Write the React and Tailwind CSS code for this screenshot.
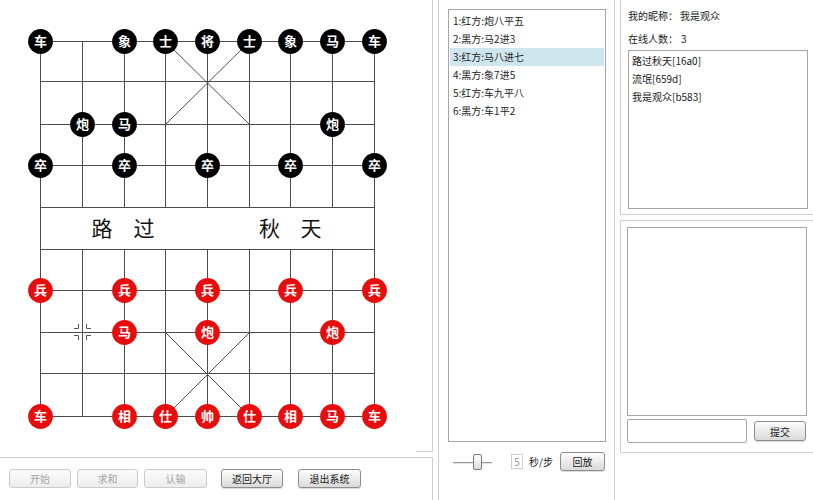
import React from 'react';

const COLS = [40.5, 82.5, 124.5, 165.5, 207.5, 249.5, 290.5, 332.5, 374.5];
const ROWS = [41.5, 81.5, 124.5, 165.5, 207.5, 249.5, 290.5, 332.5, 373.5, 416.5];

const PIECES = [
  [0, 0, '车', 'b'], [2, 0, '象', 'b'], [3, 0, '士', 'b'], [4, 0, '将', 'b'], [5, 0, '士', 'b'], [6, 0, '象', 'b'], [7, 0, '马', 'b'], [8, 0, '车', 'b'],
  [1, 2, '炮', 'b'], [2, 2, '马', 'b'], [7, 2, '炮', 'b'],
  [0, 3, '卒', 'b'], [2, 3, '卒', 'b'], [4, 3, '卒', 'b'], [6, 3, '卒', 'b'], [8, 3, '卒', 'b'],
  [0, 6, '兵', 'r'], [2, 6, '兵', 'r'], [4, 6, '兵', 'r'], [6, 6, '兵', 'r'], [8, 6, '兵', 'r'],
  [2, 7, '马', 'r'], [4, 7, '炮', 'r'], [7, 7, '炮', 'r'],
  [0, 9, '车', 'r'], [2, 9, '相', 'r'], [3, 9, '仕', 'r'], [4, 9, '帅', 'r'], [5, 9, '仕', 'r'], [6, 9, '相', 'r'], [7, 9, '马', 'r'], [8, 9, '车', 'r'],
];

const FONT = "'Noto Sans CJK SC', 'Noto Sans', sans-serif";

function Board() {
  const lines = [];
  ROWS.forEach((y, j) =>
    lines.push(<line key={'h' + j} x1={COLS[0]} y1={y} x2={COLS[8]} y2={y} />)
  );
  COLS.forEach((x, i) => {
    if (i === 0 || i === 8) {
      lines.push(<line key={'v' + i} x1={x} y1={ROWS[0]} x2={x} y2={ROWS[9]} />);
    } else {
      lines.push(<line key={'va' + i} x1={x} y1={ROWS[0]} x2={x} y2={ROWS[4]} />);
      lines.push(<line key={'vb' + i} x1={x} y1={ROWS[5]} x2={x} y2={ROWS[9]} />);
    }
  });
  lines.push(<line key="d1" x1={COLS[3]} y1={ROWS[0]} x2={COLS[5]} y2={ROWS[2]} />);
  lines.push(<line key="d2" x1={COLS[5]} y1={ROWS[0]} x2={COLS[3]} y2={ROWS[2]} />);
  lines.push(<line key="d3" x1={COLS[3]} y1={ROWS[7]} x2={COLS[5]} y2={ROWS[9]} />);
  lines.push(<line key="d4" x1={COLS[5]} y1={ROWS[7]} x2={COLS[3]} y2={ROWS[9]} />);

  return (
    <svg width="432" height="451" className="block">
      <g stroke="#4d4d4d" strokeWidth="1">{lines}</g>
      <g fill="#111" fontSize="21" fontFamily={FONT}>
        <text x="102" y="236" textAnchor="middle">路</text>
        <text x="144" y="236" textAnchor="middle">过</text>
        <text x="269.5" y="236" textAnchor="middle">秋</text>
        <text x="311" y="236" textAnchor="middle">天</text>
      </g>
      <g stroke="#555" strokeWidth="1" fill="none">
        <path d="M74 328.5 H78.5 V324" />
        <path d="M91 328.5 H86.5 V324" />
        <path d="M74 335.5 H78.5 V340" />
        <path d="M91 335.5 H86.5 V340" />
      </g>
      {PIECES.map(([c, r, ch, side], k) => (
        <g key={k}>
          <circle cx={COLS[c]} cy={ROWS[r]} r="12.4" fill={side === 'b' ? '#000000' : '#e80c0c'} />
          <text
            x={COLS[c]}
            y={ROWS[r] + 4.6}
            textAnchor="middle"
            fill="#ffffff"
            fontSize="13"
            fontWeight="bold"
            fontFamily={FONT}
          >
            {ch}
          </text>
        </g>
      ))}
    </svg>
  );
}

function Btn({ children, disabled, className }) {
  return (
    <div
      className={
        disabled
          ? `flex items-center justify-center rounded-[3px] border border-[#cbcbcb] bg-linear-to-b from-[#fbfbfb] to-[#ededed] text-[10px] text-[#a3a3a3] ${className}`
          : `flex items-center justify-center rounded-[3px] border border-[#8e8e8e] bg-linear-to-b from-[#fdfdfd] to-[#dadada] text-[10px] text-[#1a1a1a] shadow-[0_1px_1px_rgba(0,0,0,0.15)] ${className}`
      }
    >
      {children}
    </div>
  );
}

const MOVES = ['1:红方:炮八平五', '2:黑方:马2进3', '3:红方:马八进七', '4:黑方:象7进5', '5:红方:车九平八', '6:黑方:车1平2'];

export default function App() {
  return (
    <div
      className="w-[813px] h-[500px] bg-white flex overflow-hidden text-[#222]"
      style={{ fontFamily: FONT }}
    >
      {/* left column */}
      <div className="w-[433px] flex flex-col">
        <div className="h-[452px] border-r border-[#cfcfcf] flex flex-col">
          <Board />
          <div className="flex h-px">
            <div className="flex-1" />
            <div className="w-[16px] bg-[#cfcfcf]" />
          </div>
        </div>
        <div className="mt-[5px] flex-1 border-t border-r border-[#cfcfcf] flex items-start pt-[11px] pl-[9px]">
          <Btn disabled className="w-[62px] h-[19px]">开始</Btn>
          <Btn disabled className="ml-[6px] w-[61px] h-[19px]">求和</Btn>
          <Btn disabled className="ml-[6px] w-[63px] h-[19px]">认输</Btn>
          <Btn className="ml-[14px] w-[62px] h-[19px]">返回大厅</Btn>
          <Btn className="ml-[15px] w-[63px] h-[19px]">退出系统</Btn>
        </div>
      </div>

      {/* middle column */}
      <div className="ml-[5px] w-[177px] h-full border-l border-r border-[#cfcfcf] flex flex-col pt-[9px] pl-[9px] pr-[8px]">
        <div className="h-[433px] border border-[#a6a6a6] bg-white pt-[2px] px-px">
          {MOVES.map((m, i) => (
            <div
              key={i}
              className={
                i === 2
                  ? 'h-[18px] leading-[18px] pl-[3px] text-[10px] text-[#222] bg-[#cfe6ee]'
                  : 'h-[18px] leading-[18px] pl-[3px] text-[10px] text-[#222]'
              }
            >
              {m}
            </div>
          ))}
        </div>
        <div className="mt-[10px] h-[19px] flex items-center">
          <div className="ml-[5px] w-[44px] h-[16px] relative">
            <div className="absolute left-0 top-[8px] w-[39px] h-[2px] bg-[#9a9a9a] border-b border-[#e0e0e0]" />
            <div className="absolute left-[20px] top-0 w-[9px] h-[16px] rounded-[2px] border border-[#7a7a7a] bg-linear-to-b from-[#ffffff] to-[#dcdcdc]" />
          </div>
          <div className="ml-[14px] w-[12px] h-[15px] border border-[#cfcfcf] flex items-center justify-center text-[10px] text-[#9a9a9a]">
            5
          </div>
          <div className="ml-[6px] text-[10px] text-[#222] leading-none">秒/步</div>
          <Btn className="ml-[7px] w-[45px] h-[19px]">回放</Btn>
        </div>
      </div>

      {/* right column */}
      <div className="ml-[5px] flex-1 flex flex-col">
        <div className="h-[215px] border-l border-b border-[#cfcfcf] flex flex-col pl-[7px] pt-[6px]">
          <div className="h-[18px] flex items-center text-[10px] text-[#222]">
            <span>我的昵称：</span>
            <span className="ml-[2px]">我是观众</span>
          </div>
          <div className="mt-[5px] h-[18px] flex items-center text-[10px] text-[#222]">
            <span>在线人数：</span>
            <span className="ml-[3px]">3</span>
          </div>
          <div className="mt-[3px] w-[180px] h-[159px] border border-[#a6a6a6] pt-px pl-[3px]">
            <div className="h-[18px] leading-[18px] text-[10px] text-[#222]">路过秋天[16a0]</div>
            <div className="h-[18px] leading-[18px] text-[10px] text-[#222]">流氓[659d]</div>
            <div className="h-[18px] leading-[18px] text-[10px] text-[#222]">我是观众[b583]</div>
          </div>
        </div>
        <div className="mt-[5px] h-[233px] border-l border-t border-b border-[#cfcfcf] flex flex-col pl-[6px] pt-[6px]">
          <div className="w-[180px] h-[189px] border border-[#a6a6a6]" />
          <div className="mt-[3px] flex items-center">
            <div className="w-[120px] h-[24px] border border-[#a6a6a6] rounded-[2px]" />
            <Btn className="ml-[7px] w-[52px] h-[20px]">提交</Btn>
          </div>
        </div>
      </div>
    </div>
  );
}
